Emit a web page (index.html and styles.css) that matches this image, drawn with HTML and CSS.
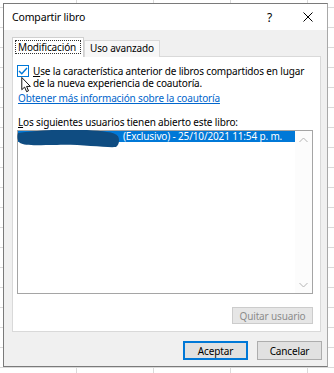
FILE: index.html
```html
<!DOCTYPE html>
<html lang="es">

<head>
    <meta charset="UTF-8">
    <title>Compartir libro</title>
    <link rel="stylesheet" href="styles.css">
</head>

<body>
    <div class="dialog">
        <div class="titlebar">
            <span class="title">Compartir libro</span>
            <span class="help">?</span>
            <svg class="close" width="10" height="10" viewBox="0 0 10 10">
                <path d="M0.5 0.5 L9.5 9.5 M9.5 0.5 L0.5 9.5" stroke="#000" stroke-width="1" fill="none"/>
            </svg>
        </div>

        <div class="body">
            <!-- pestañas -->
            <div class="tabs">
                <div class="tab active"><span class="focus">Modificación</span></div>
                <div class="tab">Uso avanzado</div>
            </div>

            <div class="panel">
                <div class="check-row">
                    <span class="checkbox">
                        <svg width="10" height="10" viewBox="0 0 10 10">
                            <path d="M1 5 L3.8 7.8 L9 2" stroke="#0078d7" stroke-width="1.4" fill="none"/>
                        </svg>
                    </span>
                    <span class="check-text"><u>U</u>se la característica anterior de libros compartidos en lugar<br>de la nueva experiencia de coautoría.</span>
                    <svg class="cursor" width="11" height="16" viewBox="0 0 11 17">
                        <path d="M0.5 0.5 L0.5 13.5 L3.5 10.7 L5.6 15.6 L7.6 14.7 L5.6 10 L9.6 10 Z" fill="#fff" stroke="#000" stroke-width="1"/>
                    </svg>
                </div>

                <a class="link" href="#">Obtener más información sobre la coautoría</a>

                <div class="label"><u>L</u>os siguientes usuarios tienen abierto este libro:</div>

                <div class="listbox">
                    <div class="items">
                        <div class="item selected"><span class="name">·</span>(Exclusivo) - 25/10/2021 11:54 p. m.</div>
                    </div>
                    <div class="scrollbar">
                        <svg width="9" height="6" viewBox="0 0 9 6"><path d="M0.5 5 L4.5 1 L8.5 5" stroke="#b4b4b4" fill="none"/></svg>
                        <svg width="9" height="6" viewBox="0 0 9 6"><path d="M0.5 1 L4.5 5 L8.5 1" stroke="#b4b4b4" fill="none"/></svg>
                    </div>
                    <!-- nombre tachado -->
                    <svg class="scribble" width="106" height="20" viewBox="0 0 106 20">
                        <path d="M1 3 C20 0 50 -1 70 0 C85 1 98 2 101 6 C103 10 102 15 99 17 C90 18 60 14 40 15 C20 15 8 16 3 13 C0 11 0 6 1 3 Z" fill="#0f4c81"/>
                    </svg>
                </div>

                <div class="panel-actions">
                    <button class="btn" disabled>Quitar usuario</button>
                </div>
            </div>

            <div class="actions">
                <button class="btn primary">Aceptar</button>
                <button class="btn">Cancelar</button>
            </div>
        </div>
    </div>
</body>

</html>
```

FILE: styles.css
```css
body {
    margin: 0;
    width: 334px;
    height: 373px;
    overflow: hidden;
    font-family: "Noto Sans", "DejaVu Sans", sans-serif;
    font-size: 10px;
    letter-spacing: -0.15px;
    color: #000;
    background-color: #fff;
    /* rejilla de la hoja de cálculo detrás */
    background-image:
        repeating-linear-gradient(to bottom, transparent 0, transparent 7px, #dadada 7px, #dadada 8px, transparent 8px, transparent 20px),
        repeating-linear-gradient(to right, transparent 0, transparent 76px, #dadada 76px, #dadada 77px, transparent 77px, transparent 73px);
}

/* ventana de diálogo */
.dialog {
    box-sizing: border-box;
    margin: 3px 0 0 3px;
    width: 325px;
    height: 364px;
    border: 1px solid #7a7a7a;
    border-right-color: #a8a8a8;
    background-color: #f0f0f0;
    display: flex;
    flex-direction: column;
}

.titlebar {
    height: 26px;
    background-color: #fff;
    display: flex;
    align-items: center;
    padding-left: 8px;
}

.titlebar .title {
    flex: 1;
    font-size: 10.5px;
}

.titlebar .help {
    font-size: 12px;
    margin-right: 31px;
}

.titlebar .close {
    margin-right: 14px;
}

.body {
    flex: 1;
    display: flex;
    flex-direction: column;
    padding: 7px 5px 0 8px;
}

/* pestañas */
.tabs {
    display: flex;
    align-items: flex-end;
    height: 20px;
    position: relative;
    z-index: 1;
    margin-bottom: -1px;
}

.tab {
    box-sizing: border-box;
    height: 17px;
    line-height: 15px;
    padding: 0 5px;
    border: 1px solid #d9d9d9;
    border-bottom: none;
    background-color: #f7f7f7;
}

.tab.active {
    height: 20px;
    width: 72px;
    padding: 2px 2px 0;
    background-color: #fff;
    border-color: #d0d0d0;
}

.tab.active .focus {
    display: block;
    line-height: 12px;
    padding: 0 2px;
    border: 1px dotted #333;
}

.panel {
    box-sizing: border-box;
    height: 276px;
    width: 309px;
    background-color: #fff;
    border: 1px solid #d9d9d9;
    padding: 8px 7px 7px 4px;
    display: flex;
    flex-direction: column;
}

.check-row {
    position: relative;
    display: flex;
    align-items: flex-start;
    line-height: 12px;
}

.checkbox {
    box-sizing: border-box;
    width: 12px;
    height: 12px;
    border: 1px solid #0078d7;
    background-color: #fff;
    display: flex;
    align-items: center;
    justify-content: center;
    margin-right: 4px;
}

.check-text {
    white-space: nowrap;
}

.cursor {
    position: absolute;
    left: 4px;
    top: 12px;
}

.link {
    margin: 3px 0 0 1px;
    color: #0066cc;
    line-height: 13px;
    align-self: flex-start;
}

.label {
    margin: 11px 0 0 1px;
    line-height: 13px;
}

.listbox {
    position: relative;
    box-sizing: border-box;
    height: 164px;
    margin-top: 1px;
    border: 1px solid #a5a5a5;
    display: flex;
}

.items {
    flex: 1;
}

.item {
    height: 11px;
    line-height: 11px;
    white-space: nowrap;
}

.item.selected {
    background-color: #0078d7;
    color: #fff;
}

.item .name {
    display: inline-block;
    width: 100px;
    text-align: right;
    margin-right: 5px;
}

.scrollbar {
    width: 17px;
    background-color: #fcfcfc;
    display: flex;
    flex-direction: column;
    justify-content: space-between;
    align-items: center;
    padding: 6px 0 5px;
}

.scribble {
    position: absolute;
    left: -1px;
    top: -1px;
}

.panel-actions {
    flex: 1;
    display: flex;
    justify-content: flex-end;
    align-items: flex-end;
}

/* botones */
.btn {
    box-sizing: border-box;
    font-family: inherit;
    font-size: 10px;
    letter-spacing: inherit;
    height: 19px;
    width: 65px;
    padding: 0;
    border: 1px solid #adadad;
    background-color: #e1e1e1;
    color: #000;
}

.btn:disabled {
    width: 81px;
    height: 17px;
    border-color: #cccccc;
    background-color: #e6e6e6;
    color: #8c8c8c;
}

.btn.primary {
    border-color: #0078d7;
    box-shadow: inset 0 0 0 1px #0078d7;
}

.actions {
    display: flex;
    justify-content: flex-end;
    gap: 9px;
    margin-top: 9px;
}
```
